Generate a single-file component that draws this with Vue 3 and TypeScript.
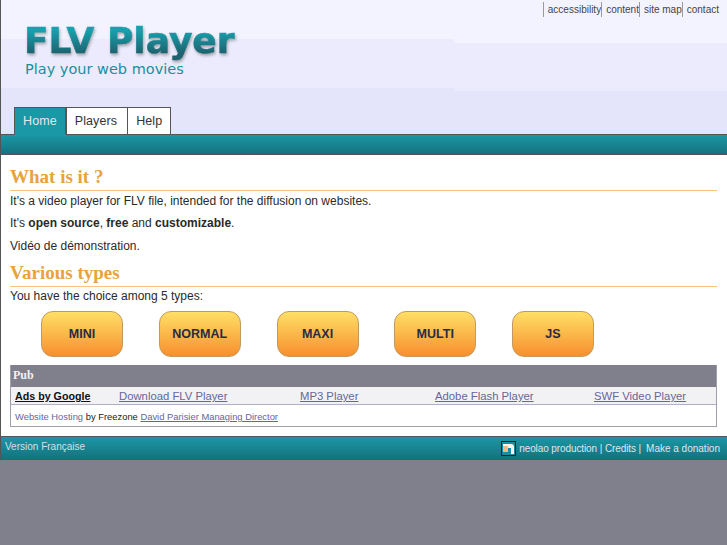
<template>
  <div class="page">
    <header class="header">
      <ul class="top-links">
        <li v-for="link in topLinks" :key="link"><a href="#">{{ link }}</a></li>
      </ul>
      <div class="logo">
        <div class="logo-title">FLV Player</div>
        <div class="logo-sub">Play your web movies</div>
      </div>
      <nav class="tabs">
        <a
          v-for="tab in tabs"
          :key="tab"
          href="#"
          class="tab"
          :class="{ active: tab === 'Home' }"
        >{{ tab }}</a>
      </nav>
    </header>
    <div class="teal-bar"></div>

    <main class="content">
      <h2>What is it ?</h2>
      <p>It's a video player for FLV file, intended for the diffusion on websites.</p>
      <p>It's <b>open source</b>, <b>free</b> and <b>customizable</b>.</p>
      <p>Vidéo de démonstration.</p>

      <h2 class="second">Various types</h2>
      <p>You have the choice among 5 types:</p>
      <div class="types">
        <a v-for="t in types" :key="t" href="#" class="type-btn">{{ t }}</a>
      </div>

      <section class="pub">
        <div class="pub-title">Pub</div>
        <div class="ads">
          <a href="#" class="ads-label">Ads by Google</a>
          <a v-for="ad in ads" :key="ad" href="#">{{ ad }}</a>
        </div>
        <div class="hosting">
          <a href="#" class="plain">Website Hosting</a> by Freezone
          <a href="#">David Parisier Managing Director</a>
        </div>
      </section>
    </main>

    <footer class="footer">
      <a href="#" class="version">Version Française</a>
      <div class="credits">
        <svg class="neolao" width="15" height="15" viewBox="0 0 15 15">
          <rect x="0.5" y="0.5" width="14" height="14" fill="#1a8f9c" stroke="#123" />
          <path d="M2 3h8c2 0 3 1 3 3v7h-3V7H7v3H2z" fill="#f6f3ea" />
          <path d="M2 5h5v6H2z" fill="#f3bd78" />
        </svg>
        <span class="neolao-text">neolao production | Credits |</span>
        <span class="donate">Make a donation</span>
      </div>
    </footer>
  </div>
</template>

<script setup lang="ts">
const topLinks: string[] = ['accessibility', 'content', 'site map', 'contact'];
const tabs: string[] = ['Home', 'Players', 'Help'];
const types: string[] = ['MINI', 'NORMAL', 'MAXI', 'MULTI', 'JS'];
const ads: string[] = ['Download FLV Player', 'MP3 Player', 'Adobe Flash Player', 'SWF Video Player'];
</script>

<style>
html,
body {
  margin: 0;
  background: #807f8c;
}
</style>

<style scoped>
.page {
  height: 545px;
  overflow: hidden;
  font-family: "Liberation Sans", Arial, sans-serif;
  font-size: 12px;
  color: #2a2a2a;
}

.header {
  position: relative;
  box-sizing: border-box;
  height: 135px;
  border-left: 1px solid #555;
  border-bottom: 1px solid #555;
  background:
    linear-gradient(#f3f3ff, #f3f3ff) 0 0 / 453px 39px no-repeat,
    linear-gradient(#ebebfd, #ebebfd) 0 39px / 453px 49px no-repeat,
    linear-gradient(#f3f3ff, #f3f3ff) 453px 0 / 100% 43px no-repeat,
    linear-gradient(#ebebfd, #ebebfd) 453px 43px / 100% 48px no-repeat,
    #e4e4fb;
  display: flex;
  flex-direction: column;
}

.top-links {
  position: absolute;
  top: 2px;
  right: 8px;
  display: flex;
  margin: 0;
  padding: 0;
  list-style: none;
  font-size: 10px;
  line-height: 15px;
}

.top-links li {
  border-left: 1px solid #999;
  padding-left: 4px;
}

.top-links a {
  color: #444;
  text-decoration: none;
}

.logo {
  padding: 20px 0 0 23px;
}

.logo-title {
  font-family: "DejaVu Sans", sans-serif;
  font-weight: bold;
  font-size: 36px;
  line-height: 42px;
  background: linear-gradient(#17a0ad 25%, #1d6470 78%);
  -webkit-background-clip: text;
  background-clip: text;
  color: transparent;
  -webkit-text-stroke: 0.6px transparent;
  width: max-content;
  filter: drop-shadow(1px 2px 1.5px rgba(70, 70, 70, 0.45));
}

.logo-sub {
  font-family: "DejaVu Sans", sans-serif;
  font-size: 14.5px;
  line-height: 17px;
  margin: -1px 0 0 1px;
  color: #1a8f9c;
}

.tabs {
  margin-top: auto;
  padding-left: 13px;
  display: flex;
  margin-bottom: -1px;
}

.tab {
  box-sizing: border-box;
  height: 28px;
  padding: 0 10px 0 8px;
  line-height: 26px;
  font-size: 12.5px;
  letter-spacing: 0.1px;
  color: #333;
  background: #fff;
  border: 1px solid #555;
  margin-right: -1px;
  text-decoration: none;
}

.tab:last-child {
  padding-right: 8px;
}

.tab.active {
  padding: 0 8px;
  background: #1a98a5;
  color: #e6e6e6;
  border-bottom-color: #1a98a5;
  margin-right: 0;
}

.teal-bar {
  box-sizing: border-box;
  height: 20px;
  border-left: 1px solid #555;
  border-bottom: 1px solid #555;
  background: linear-gradient(#1a98a5, #15727e);
}

.content {
  box-sizing: border-box;
  height: 281px;
  padding: 11px 10px 0 9px;
  background: #fff;
  border-left: 1px solid #555;
}

h2 {
  margin: 0 0 2px;
  padding-bottom: 2px;
  font-family: "Liberation Serif", "Times New Roman", serif;
  font-size: 19px;
  line-height: 22px;
  font-weight: bold;
  color: #e8a33d;
  border-bottom: 1px solid #f5c57e;
}

h2.second {
  margin: 8.5px 0 1px;
}

p {
  margin: 0 0 6.25px;
  font-size: 12px;
  line-height: 16px;
}

.types {
  display: flex;
  gap: 35.75px;
  padding-left: 31px;
  margin-top: 7px;
}

.type-btn {
  box-sizing: border-box;
  width: 82px;
  height: 46px;
  border: 1px solid #c09a5e;
  border-radius: 12px;
  background: linear-gradient(#ffdf66, #f78f2e);
  color: #2a2a44;
  font-weight: bold;
  font-size: 12.5px;
  line-height: 44px;
  text-align: center;
  text-decoration: none;
}

.pub {
  margin-top: 8px;
  border: 1px solid #a0a0aa;
  border-top: none;
}

.pub-title {
  height: 22px;
  background: #807f8c;
  color: #f2f2f2;
  font-family: "Liberation Serif", serif;
  font-weight: bold;
  font-size: 12px;
  line-height: 21px;
  padding-left: 2px;
}

.ads {
  display: grid;
  grid-template-columns: 104px 181px 135px 159px 1fr;
  height: 17px;
  padding-left: 4px;
  line-height: 18px;
  background: #f2f2f4;
  border-bottom: 1px solid #b0b0c4;
  font-size: 11.3px;
}

.ads a {
  color: #66669a;
}

.ads .ads-label {
  color: #111;
  font-weight: bold;
  font-size: 10.7px;
}

.hosting {
  padding: 0 4px;
  height: 21px;
  line-height: 23px;
  font-size: 9.4px;
  color: #222;
}

.hosting a {
  color: #66669a;
}

.hosting a.plain {
  text-decoration: none;
}

.footer {
  box-sizing: border-box;
  height: 24px;
  border-top: 1px solid #555;
  border-bottom: 1px solid #555;
  border-left: 1px solid #555;
  background: linear-gradient(#1a98a5, #15727e);
  display: flex;
  justify-content: space-between;
  padding: 0 7px 0 4px;
  color: #dfe8e8;
  font-size: 10px;
}

.version {
  color: #cfe2e4;
  text-decoration: none;
  line-height: 20px;
}

.credits {
  display: flex;
  align-items: center;
  padding-top: 1px;
}

.neolao {
  margin-right: 3px;
}

.neolao-text {
  letter-spacing: -0.1px;
}

.donate {
  margin-left: 5px;
}
</style>
